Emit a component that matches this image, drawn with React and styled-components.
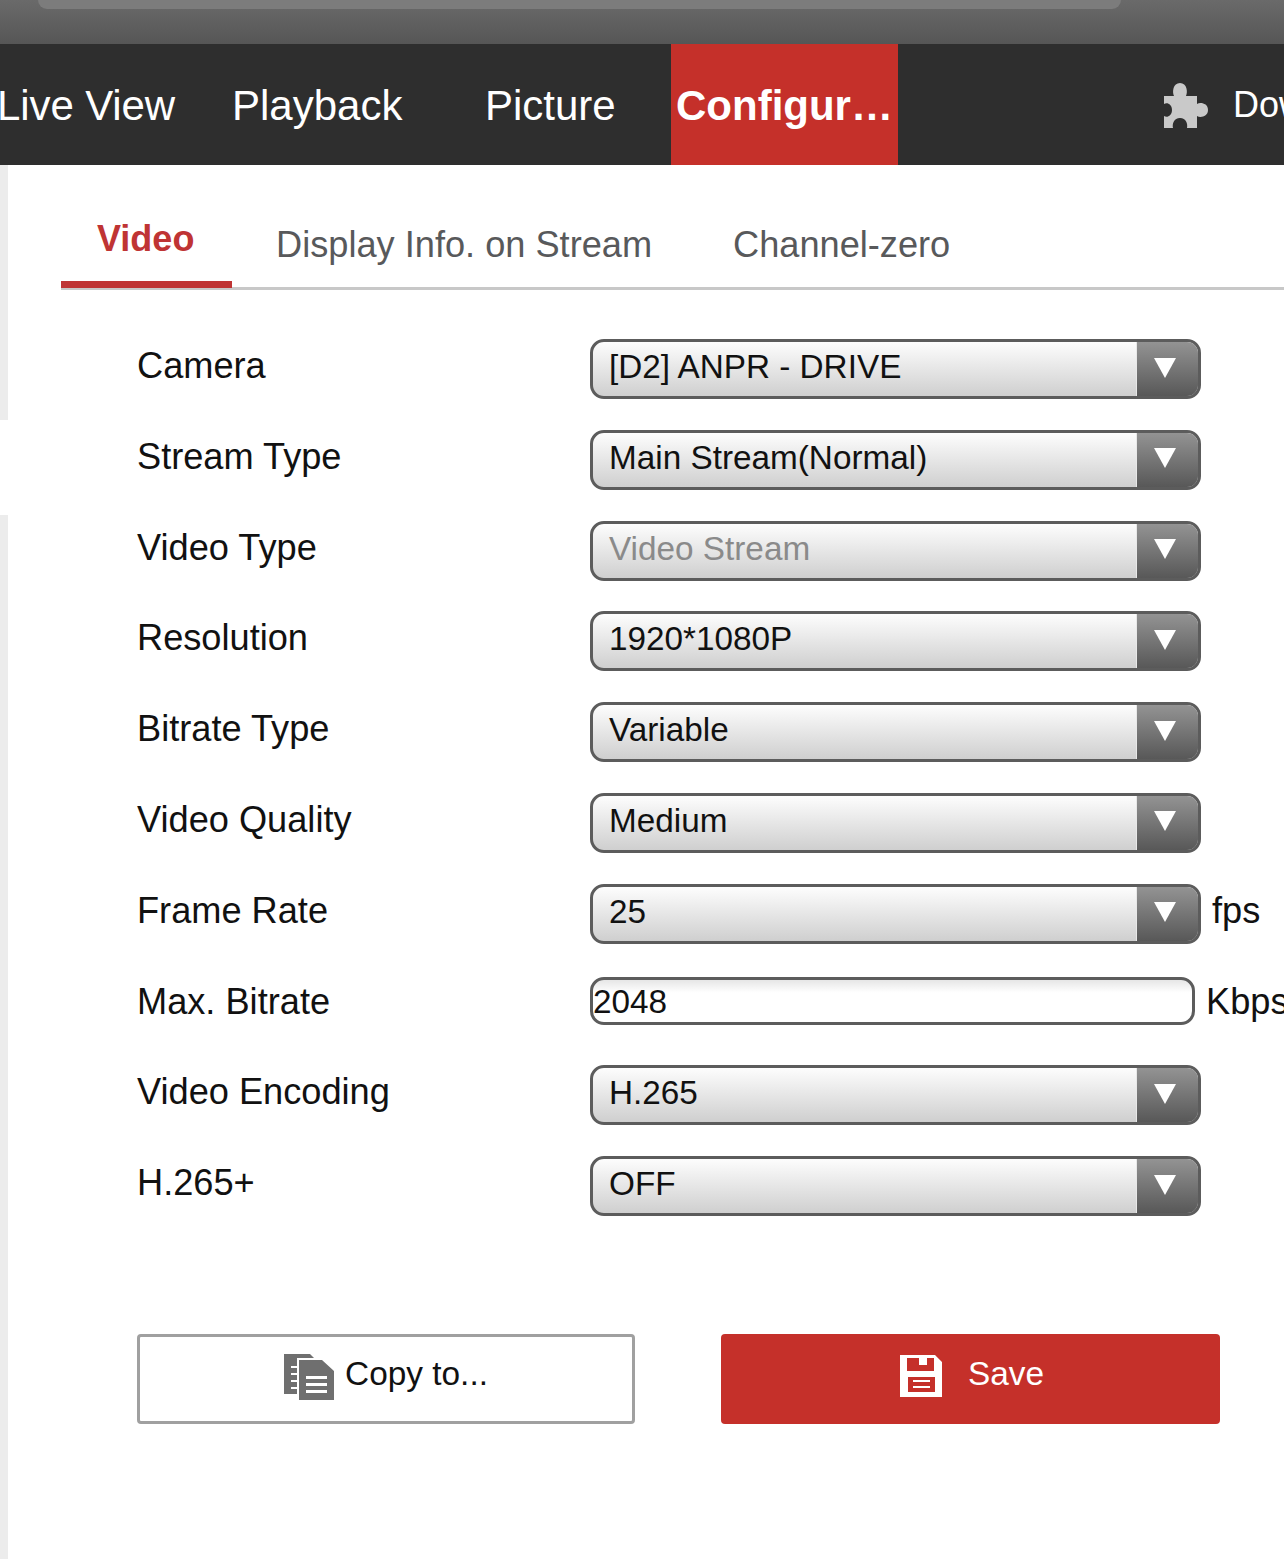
import React from 'react';
import styled, { createGlobalStyle } from 'styled-components';

const fields = [
  { label: 'Camera', value: '[D2] ANPR - DRIVE' },
  { label: 'Stream Type', value: 'Main Stream(Normal)' },
  { label: 'Video Type', value: 'Video Stream', disabled: true },
  { label: 'Resolution', value: '1920*1080P' },
  { label: 'Bitrate Type', value: 'Variable' },
  { label: 'Video Quality', value: 'Medium' },
  { label: 'Frame Rate', value: '25', unit: 'fps' },
  { label: 'Max. Bitrate', value: '2048', unit: 'Kbps', input: true },
  { label: 'Video Encoding', value: 'H.265' },
  { label: 'H.265+', value: 'OFF' },
];

function App() {
  return (
    <Page>
      <GlobalStyle />
      <TopBar>
        <AddressPill />
      </TopBar>
      <Nav>
        <NavItem $width={235} $first>Live View</NavItem>
        <NavItem $width={253}>Playback</NavItem>
        <NavItem $width={185}>Picture</NavItem>
        <NavActive>Configur…</NavActive>
        <NavRight>
          <PuzzleIcon />
          <DownloadText>Download</DownloadText>
        </NavRight>
      </Nav>
      <Body>
        <Rail>
          <RailPart $height={255} />
          <RailGap />
          <RailPart $grow />
        </Rail>
        <Content>
          <Tabs>
            <TabActive>Video</TabActive>
            <Tab $width={457}>Display Info. on Stream</Tab>
            <Tab>Channel-zero</Tab>
          </Tabs>
          <Form>
            {fields.map(field => (
              <Row key={field.label}>
                <Label>{field.label}</Label>
                {field.input ? (
                  <TextBox>{field.value}</TextBox>
                ) : (
                  <Select>
                    <SelectValue $disabled={field.disabled}>
                      {field.value}
                    </SelectValue>
                    <SelectArrow>
                      <Triangle />
                    </SelectArrow>
                  </Select>
                )}
                {field.unit && <Unit>{field.unit}</Unit>}
              </Row>
            ))}
          </Form>
          <Buttons>
            <CopyButton>
              <CopyIcon />
              <ButtonText>Copy to...</ButtonText>
            </CopyButton>
            <SaveButton>
              <SaveIcon />
              <ButtonText>Save</ButtonText>
            </SaveButton>
          </Buttons>
        </Content>
      </Body>
    </Page>
  );
}

function PuzzleIcon() {
  return (
    <IconSvg width="47" height="46" viewBox="0 0 47 46">
      <path
        fill="#c9c9c9"
        d="M2 14H12C10 10 11 1 18 1C25 1 26 10 24 14H35V22C38 20 46 21 46 28C46 35 38 36 35 34V46H25C26 42 24 36 18 36C12 36 10 42 11 46H2V34C5 36 10 34 10 28C10 22 5 20 2 22Z"
      />
    </IconSvg>
  );
}

function CopyIcon() {
  return (
    <IconSvg width="50" height="47" viewBox="0 0 50 47">
      <path
        fill="#6f6f6f"
        fillRule="evenodd"
        d="M0 1H26L30 5H13V41H0ZM7 13V15H13V13ZM7 20V22H13V20ZM7 27V29H13V27ZM7 34V36H13V34Z"
      />
      <path
        fill="#6f6f6f"
        fillRule="evenodd"
        d="M15 7H38L50 18V47H15ZM22 23V26H43V23ZM22 30V33H43V30ZM22 37V40H43V37Z"
      />
    </IconSvg>
  );
}

function SaveIcon() {
  return (
    <IconSvg width="44" height="44" viewBox="0 0 44 44">
      <path
        fill="#fff"
        fillRule="evenodd"
        d="M1 1H36L43 8V43H1ZM8 4V17H35V4H28V11H20V4ZM9 23V38H36V23ZM14 26H31V28H14ZM14 32H31V34H14Z"
      />
    </IconSvg>
  );
}

export default App;

const GlobalStyle = createGlobalStyle`
  html, body {
    margin: 0;
    background: #fff;
  }
`;

const Page = styled.div`
  width: 1284px;
  height: 1559px;
  overflow: hidden;
  background: #fff;
  font-family: 'Liberation Sans', Arial, sans-serif;
  color: #111;
`;

const TopBar = styled.div`
  height: 44px;
  background: linear-gradient(180deg, #6a6a6a, #565656);
`;

const AddressPill = styled.div`
  width: 1083px;
  height: 9px;
  margin-left: 38px;
  background: #7c7c7c;
  border-radius: 0 0 22px 22px;
`;

const Nav = styled.div`
  display: flex;
  align-items: stretch;
  height: 121px;
  background: #2e2e2e;
  color: #fff;
  font-size: 42px;
  white-space: nowrap;
`;

const NavItem = styled.div`
  display: flex;
  align-items: center;
  flex: 0 0 ${props => props.$width}px;
  margin-left: ${props => (props.$first ? '-3px' : '0')};
  padding-top: 3px;
  box-sizing: border-box;
  letter-spacing: ${props => (props.$first ? '-0.1px' : '0')};
`;

const NavActive = styled.div`
  display: flex;
  align-items: center;
  justify-content: center;
  flex: 0 0 227px;
  margin-left: 1px;
  margin-right: -1px;
  background: #c5302a;
  font-weight: bold;
  padding-top: 3px;
  box-sizing: border-box;
`;

const NavRight = styled.div`
  display: flex;
  align-items: center;
  gap: 24px;
  margin-left: 265px;
  font-size: 36px;
`;

const DownloadText = styled.span`
  padding-top: 1px;
`;

const IconSvg = styled.svg`
  display: block;
  flex-shrink: 0;
  filter: blur(0.5px);
`;

const Body = styled.div`
  display: flex;
  height: 1394px;
`;

const Rail = styled.div`
  display: flex;
  flex-direction: column;
  flex: 0 0 8px;
`;

const RailPart = styled.div`
  background: #ececec;
  height: ${props => (props.$height ? `${props.$height}px` : 'auto')};
  flex-grow: ${props => (props.$grow ? 1 : 0)};
`;

const RailGap = styled.div`
  height: 95px;
`;

const Content = styled.div`
  flex: 1;
  min-width: 0;
  padding-left: 53px;
`;

const Tabs = styled.div`
  display: flex;
  align-items: flex-end;
  height: 122px;
  margin-top: 3px;
  border-bottom: 3px solid #c8c8c8;
  box-sizing: border-box;
  white-space: nowrap;
`;

const TabActive = styled.div`
  flex: 0 0 171px;
  height: 67px;
  margin-bottom: -1px;
  padding-left: 36px;
  box-sizing: border-box;
  border-bottom: 7px solid #bf3434;
  color: #bf3434;
  font-size: 36px;
  font-weight: bold;
  line-height: 36px;
  margin-right: 44px;
`;

const Tab = styled.div`
  flex: 0 0 ${props => (props.$width ? `${props.$width}px` : 'auto')};
  height: 60px;
  color: #58595b;
  font-size: 36.2px;
  line-height: 36px;
`;

const Form = styled.div`
  display: flex;
  flex-direction: column;
  margin-top: 49px;
  padding-left: 76px;
`;

const Row = styled.div`
  display: flex;
  align-items: center;
  height: 60px;
  margin-bottom: 30.8px;
`;

const Label = styled.div`
  flex: 0 0 453px;
  font-size: 36.2px;
  padding-bottom: 6px;
`;

const Select = styled.div`
  display: flex;
  flex-shrink: 0;
  width: 611px;
  height: 60px;
  box-sizing: border-box;
  border: 3px solid #5c5c5c;
  border-radius: 14px;
  overflow: hidden;
  background: linear-gradient(180deg, #fdfdfd, #cfcfcf);
`;

const SelectValue = styled.div`
  flex: 1;
  padding-left: 16px;
  font-size: 33.3px;
  line-height: 50px;
  color: ${props => (props.$disabled ? '#8a8a8a' : '#111')};
`;

const SelectArrow = styled.div`
  display: flex;
  align-items: center;
  justify-content: center;
  flex: 0 0 62px;
  padding: 0 5px 3px 0;
  box-sizing: border-box;
  border-left: 1px solid #e8e8e8;
  background: linear-gradient(180deg, #939393, #585858);
`;

const Triangle = styled.div`
  width: 0;
  height: 0;
  border-left: 11px solid transparent;
  border-right: 11px solid transparent;
  border-top: 20px solid #fff;
`;

const TextBox = styled.div`
  flex-shrink: 0;
  width: 605px;
  height: 48px;
  margin-bottom: 7px;
  box-sizing: border-box;
  border: 3px solid #5c5c5c;
  border-radius: 14px;
  background: linear-gradient(180deg, #e6e6e6, #fff 30%);
  font-size: 33.3px;
  line-height: 44px;
`;

const Unit = styled.div`
  flex-shrink: 0;
  margin-left: 11px;
  font-size: 36.2px;
  padding-bottom: 6px;
`;

const Buttons = styled.div`
  display: flex;
  gap: 86px;
  margin-top: 87px;
  padding-left: 76px;
`;

const ButtonText = styled.span`
  padding-bottom: 5px;
  font-size: 33.4px;
`;

const CopyButton = styled.div`
  display: flex;
  align-items: center;
  justify-content: center;
  gap: 11px;
  width: 498px;
  height: 90px;
  box-sizing: border-box;
  border: 3px solid #a0a0a0;
  border-radius: 4px;
  padding-bottom: 5px;
`;

const SaveButton = styled.div`
  display: flex;
  align-items: center;
  justify-content: center;
  gap: 25px;
  width: 499px;
  height: 90px;
  box-sizing: border-box;
  border-radius: 4px;
  background: #c5302a;
  color: #fff;
  padding: 0 0 5px 2px;
`;
